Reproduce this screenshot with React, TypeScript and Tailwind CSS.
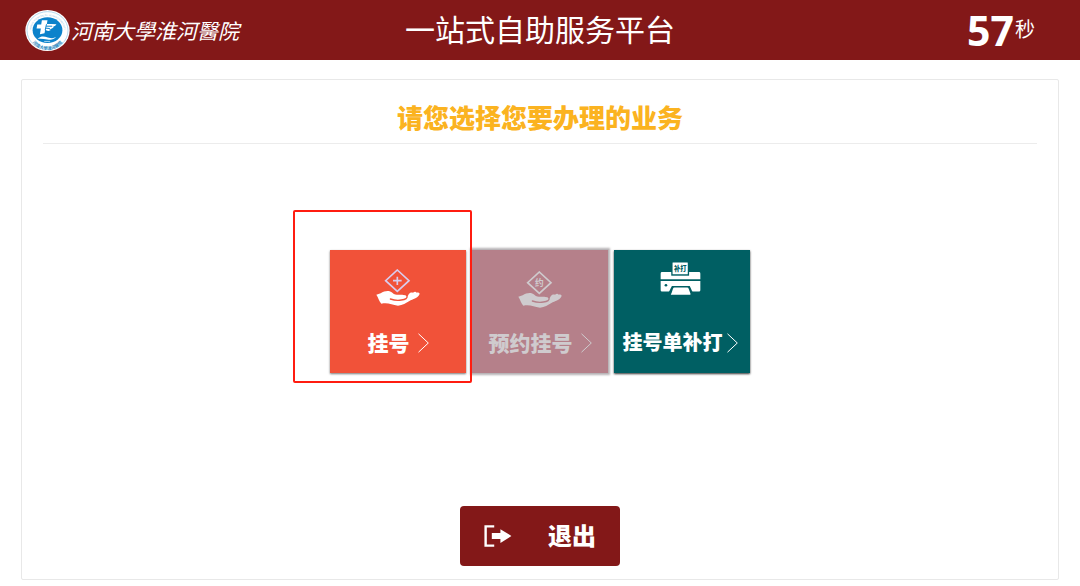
import { useId } from "react";
import clsx from "clsx";

interface Service {
  id: string;
  label: string;
  icon: "register" | "appointment" | "print";
  tile: string;
  disabled?: boolean;
  selected?: boolean;
}

const services: Service[] = [
  { id: "register", label: "挂号", icon: "register", tile: "bg-[#f15239] pt-[19px] text-[21px] text-white shadow-[0_1px_2px_#777]", selected: true },
  { id: "appointment", label: "预约挂号", icon: "appointment", tile: "bg-[#b5808a] pt-[21px] text-[21px] text-[#cfcbce] shadow-[0_0_2px_2px_#b5b0b3]", disabled: true },
  { id: "reprint", label: "挂号单补打", icon: "print", tile: "bg-[#005f63] pt-3 pr-1 text-[20px] text-white shadow-[0_1px_2px_#333]" },
];

function HospitalSeal() {
  const arcId = useId();
  const topId = useId();
  return (
    <svg viewBox="0 0 134 124" className="h-[41px] w-[45px] shrink-0" aria-hidden="true">
      <defs>
        <path id={arcId} d="M13 74 C22 136 112 136 121 74" />
        <path id={topId} d="M17 66 C17 2 117 2 117 66" />
      </defs>
      <ellipse cx="67" cy="62" rx="67" ry="62" fill="#fff" />
      <ellipse cx="67" cy="62" rx="62" ry="57" fill="none" stroke="#8fc5e6" strokeWidth="2" />
      <ellipse cx="67" cy="61" rx="45" ry="39" fill="#0b82cb" />
      <path d="M50 31h17l-2 11h12l17 1c-2 5-7 7-13 8h5c-2 5-8 7-14 7 2 2 4 2 6 2-5 5-13 4-18 0l-2 10-14 3 3-17H34l2-12h12z" fill="#fff" />
      <path d="M64 43 60 61M63 49h18M62 55l12 1" stroke="#0b82cb" strokeWidth="3" />
      <path d="M37 87c12-10 20-7 31-4s17 3 25-1c-8 9-17 9-27 7s-18-3-29-2z" fill="#fff" />
      <path d="M57 95h18" stroke="#a6d3ee" strokeWidth="3" />
      <text fill="#2585bd" fontSize="13" fontWeight="700" fontFamily="'Noto Sans CJK TC', sans-serif">
        <textPath href={`#${arcId}`} startOffset="50%" textAnchor="middle">河南大學淮河醫院</textPath>
      </text>
      <text fill="#8fc5e6" fontSize="7" fontFamily="'Liberation Sans', sans-serif">
        <textPath href={`#${topId}`} startOffset="50%" textAnchor="middle">HUAIHE HOSPITAL OF HENAN UNIVERSITY</textPath>
      </text>
    </svg>
  );
}

function HandIcon({ mark }: { mark: "plus" | "appointment" }) {
  const muted = mark === "appointment";
  const fill = muted ? "#cfcbce" : "#fff";
  const line = muted ? "#cfcbce" : "#d9cdee";
  const groove = muted ? "#b5808a" : "#f15239";
  return (
    <svg viewBox="0 0 132 111" className="h-[37px] w-11" aria-hidden="true">
      <path d="M64 3 99 35 64 67 29 35z" fill="none" stroke={line} strokeWidth="5" />
      {muted ? (
        <text x="64" y="44" textAnchor="middle" fontSize="26" fontWeight="700" fill={line} fontFamily="'Noto Sans CJK SC', sans-serif">约</text>
      ) : (
        <path d="M64 23v25M51 35h26" stroke={line} strokeWidth="5" />
      )}
      <path d="M1 77 14 73C26 65 40 63 49 71c6 6 12 6 18 6h17c8 0 12 4 10 8 2-6 4-10 8-13 4-3 7-1 9-1 5-4 9-3 11 0 5-2 8 1 9 3-3 11-15 14-27 20-15 9-24 15-38 16-19-3-30-10-50-6C9 97 7 85 1 77z" fill={fill} />
      <path d="M43 90c12 4 22 5 33 3 13-1 19-6 17-12-1-5-6-5-11-5" fill="none" stroke={groove} strokeWidth="4" strokeLinecap="round" />
    </svg>
  );
}

function PrinterIcon() {
  return (
    <svg viewBox="0 0 124 102" className="h-[34px] w-[41px]" aria-hidden="true">
      <path d="M2 34q0-4 4-4h112q4 0 4 4v18H2zM2 57h120v28q0 4-4 4H6q-4 0-4-4z" fill="#fff" />
      <rect x="34" y="-1" width="54" height="42" fill="#005f63" />
      <rect x="38" y="1" width="46" height="36" rx="1" fill="#fff" />
      <text x="61" y="26" textAnchor="middle" fontSize="19" fontWeight="900" fill="#005f63" fontFamily="'Noto Sans CJK SC', sans-serif">补打</text>
      <circle cx="18" cy="70" r="4" fill="#005f63" />
      <path d="M26 92 36 72h54l9 20z" fill="#005f63" />
      <path d="M33 99q-1-2 2-6l4-12q1-4 5-4h38q4 0 5 4l5 14q1 4-1 4z" fill="#fff" />
    </svg>
  );
}

function ServiceIcon({ name }: { name: Service["icon"] }) {
  if (name === "print") return <PrinterIcon />;
  return <HandIcon mark={name === "appointment" ? "appointment" : "plus"} />;
}

function ServiceTile({ service }: { service: Service }) {
  return (
    <div className="relative">
      <button
        type="button"
        disabled={service.disabled}
        className={clsx("flex h-[123px] w-[136px] flex-col items-center justify-between pb-4 font-black", service.tile)}
      >
        <ServiceIcon name={service.icon} />
        <span className={clsx("flex items-center leading-7", service.icon === "print" ? "gap-1" : "gap-2")}>
          {service.label}
          <svg viewBox="0 0 11 20" className="h-5 w-[11px]" fill="none" stroke="currentColor" strokeWidth="1" aria-hidden="true">
            <path d="M.5.8 10.3 10 .5 19.2" />
          </svg>
        </span>
      </button>
      {service.selected && (
        <span className="pointer-events-none absolute -top-10 -left-[37px] z-10 h-[173px] w-[179px] rounded-xs border-2 border-[#ff1c10]" />
      )}
    </div>
  );
}

export default function App() {
  return (
    <div className="flex min-h-screen flex-col bg-white font-['Open_Sans','Noto_Sans_CJK_SC',sans-serif]">
      <header className="grid h-[60px] grid-cols-[1fr_auto_1fr] items-center bg-[#831818] px-[25px] text-white">
        <div className="flex items-center gap-px">
          <HospitalSeal />
          <span className="font-['Noto_Sans_CJK_TC',sans-serif] text-[21px] leading-7 whitespace-nowrap italic">河南大學淮河醫院</span>
        </div>
        <h1 className="text-3xl font-normal">一站式自助服务平台</h1>
        <div className="flex items-center justify-end gap-px pr-5">
          <span className="text-[41px] leading-[60px] font-bold">57</span>
          <span className="text-xl">秒</span>
        </div>
      </header>

      <main className="mx-[21px] mt-[19px] mb-1.5 flex grow flex-col items-center rounded-xs border border-[#e8e8e8] px-[21px] pb-[13px]">
        <h2 className="w-full border-b border-[#ececec] pt-5 pb-[7px] text-center text-[26px] leading-9 font-black text-[#fbb320]">请您选择您要办理的业务</h2>
        <div className="mt-[106px] flex gap-1.5">
          {services.map((service) => (
            <ServiceTile key={service.id} service={service} />
          ))}
        </div>
        <button type="button" className="mt-auto flex h-[60px] w-40 items-center justify-center gap-9 rounded-sm bg-[#831818] text-2xl font-black text-white">
          <svg viewBox="0 0 80 64" className="h-[22px] w-7" aria-hidden="true">
            <path d="M29 4H4v56h25" fill="none" stroke="#fff" strokeWidth="7" />
            <path d="M22 23h25V12l32 20-32 20V41H22z" fill="#fff" />
          </svg>
          退出
        </button>
      </main>
    </div>
  );
}
